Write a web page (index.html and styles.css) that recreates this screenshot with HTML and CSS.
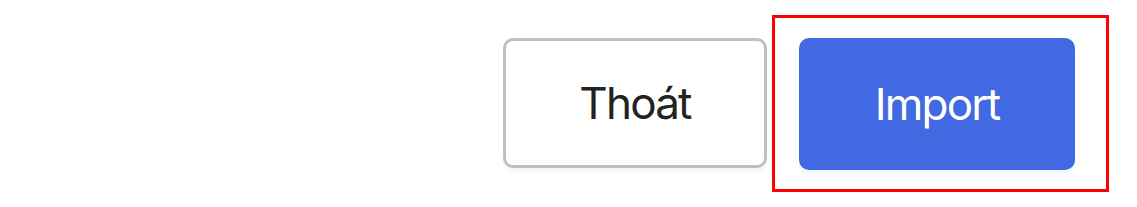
FILE: index.html
```html
<!DOCTYPE html>
<html lang="vi">

<head>
    <meta charset="UTF-8">
    <meta name="viewport" content="width=device-width, initial-scale=1.0">
    <title>Import</title>
    <link rel="stylesheet" href="styles.css">
</head>

<body>
    <div class="actions">
        <button class="btn btn-cancel">Thoát</button>
        <div class="highlight">
            <button class="btn btn-import">Import</button>
        </div>
    </div>
</body>

</html>
```

FILE: styles.css
```css
*{
    margin: 0;
    padding: 0;
    box-sizing: border-box;
}
body{
    background-color: white;
    font-family: Inter, "Noto Sans", sans-serif;
}
.actions{
    display: flex;
    justify-content: flex-end;
    align-items: flex-start;
    padding: 15px 28px 0 0;
    gap: 5px;
}
.btn{
    font-family: inherit;
    font-size: 44px;
    font-weight: 400;
    letter-spacing: -1.8px;
    border-radius: 10px;
    cursor: pointer;
    outline: none;
}
.btn-cancel{
    margin-top: 23px;
    width: 264px;
    height: 130px;
    background-color: white;
    color: #222;
    border: 3px solid silver;
    box-shadow: 0 6px 4px -1px rgba(0, 0, 0, 0.04);
}
.highlight{
    border: 3px solid red;
    padding: 20px 31px 19px 24px;
    height: 177px;
}
.btn-import{
    width: 276px;
    height: 132px;
    background-color: royalblue;
    color: white;
    border: none;
    box-shadow: 0 6px 4px -1px rgba(65, 105, 225, 0.06);
}
```
